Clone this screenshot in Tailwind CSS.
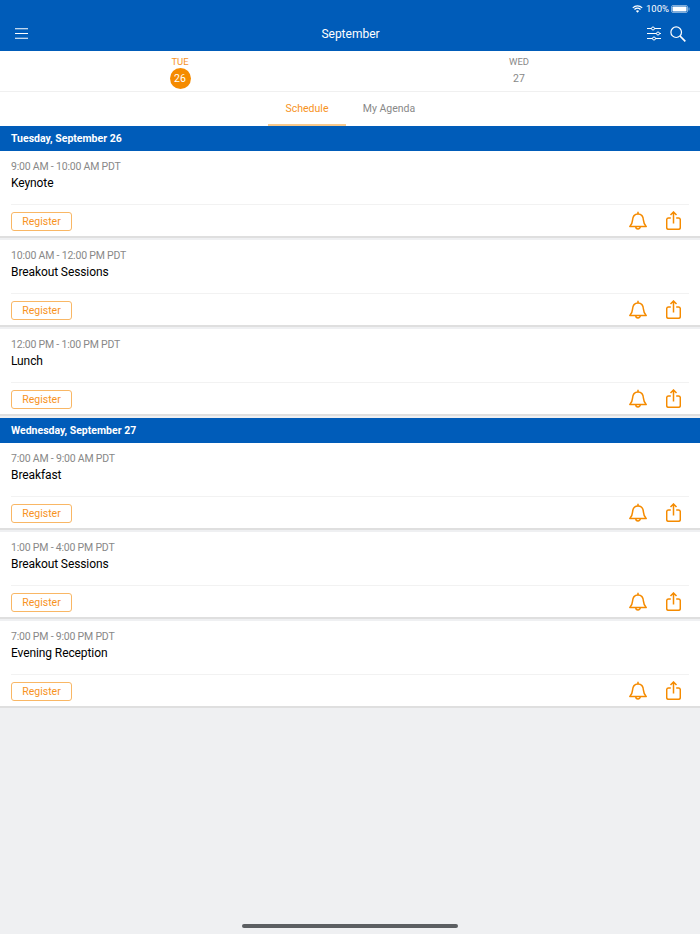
<!DOCTYPE html>
<html lang="en">
<head>
    <meta charset="UTF-8">
    <meta name="viewport" content="width=device-width, initial-scale=1.0">
    <title>Schedule</title>
    <script src="https://cdn.jsdelivr.net/npm/@tailwindcss/browser@4"></script>
</head>
<body class="bg-[#eff0f2] font-['Roboto',sans-serif]">
    <div class="relative h-[934px] w-[700px] overflow-hidden">
        <!-- header -->
        <header class="h-[51px] bg-[#005cb9] text-white">
            <div class="flex h-[16px] items-center justify-end gap-[2px] pr-[10px] pt-[1px]">
                <svg class="mr-[1px] w-[11px] h-[8px]" viewBox="0 0 12 9" fill="none" stroke="white"><path d="M.7 3.200a7.600 7.600 0 0 1 10.600 0" stroke-width="1.400"/><path d="M2.600 5a4.900 4.900 0 0 1 6.800 0" stroke-width="1.400"/><path d="M6 8.800 4.200 6.800a2.600 2.600 0 0 1 3.600 0z" fill="white" stroke="none"/></svg>
                <span class="text-[9.500px] leading-none">100%</span>
                <svg class="w-[19px] h-[8px]" viewBox="0 0 19 8"><rect x=".5" y=".5" width="16" height="7" rx="1.500" fill="none" stroke="white" stroke-opacity=".5"/><rect x="1.500" y="1.500" width="14" height="5" rx=".8" fill="white"/><rect x="17.500" y="2.500" width="1" height="3" fill="white" fill-opacity=".5"/></svg>
            </div>
            <div class="grid h-[35px] grid-cols-[1fr_auto_1fr] items-center pl-[15px] pr-[14px]">
                <svg class="w-[13px] h-[11px]" viewBox="0 0 13 11" stroke="white" stroke-width="1.100"><path d="M0 .8h13M0 5.500h13M0 10.200h13"/></svg>
                <span class="pt-[1px] text-[12px]">September</span>
                <div class="flex items-center justify-end gap-[9px]">
                    <svg class="w-[14px] h-[15px]" viewBox="0 0 14 15" fill="none" stroke="white" stroke-width="1"><path d="M0 2.500h4.500M7.500 2.500H14M0 7.500h9.500M12.500 7.500H14M0 12.500h5.500M8.500 12.500H14"/><circle cx="6" cy="2.500" r="1.500"/><circle cx="11" cy="7.500" r="1.500"/><circle cx="7" cy="12.500" r="1.500"/></svg>
                    <svg class="w-[16px] h-[16px]" viewBox="0 0 16 16" fill="none" stroke="white"><circle cx="6.200" cy="6.200" r="5.300" stroke-width="1.200"/><path d="m10 10 5.300 5.300" stroke-width="1.700"/></svg>
                </div>
            </div>
        </header>

        <!-- date strip -->
        <div class="grid h-[41px] grid-cols-[360px_318px] border-b border-[#f0f0f0] bg-white text-center">
            <div class="flex flex-col items-center pt-[5px]">
                <span class="text-[9.500px] leading-[11px] text-[#f7931e]">TUE</span>
                <span class="mt-[1px] flex h-[21px] w-[21px] items-center justify-center rounded-full bg-[#f58b00] text-[10.500px] text-white">26</span>
            </div>
            <div class="flex flex-col items-center pt-[5px]">
                <span class="text-[9.500px] leading-[11px] text-[#888888]">WED</span>
                <span class="mt-[1px] flex h-[21px] w-[21px] items-center justify-center text-[10.500px] text-[#888888]">27</span>
            </div>
        </div>

        <!-- tabs -->
        <div class="flex h-[34px] bg-white pl-[268px] text-[10.500px]">
            <div class="flex h-[34px] w-[78px] items-center justify-center border-b-2 border-[#f9c98b] pt-[1px] text-[#f7931e]">Schedule</div>
            <div class="flex h-[34px] w-[86px] items-center justify-center pb-[1px] text-[#888888]">My Agenda</div>
        </div>

        <!-- Tuesday -->
        <h2 class="flex h-[25px] items-center bg-[#005cb9] pl-[11px] pt-[1px] text-[10.500px] font-bold text-white">Tuesday, September 26</h2>
        <div class="flex flex-col gap-[2px]">
            <article class="h-[87px] border-b-2 border-[#dfdfdf] bg-white px-[11px]">
                <div class="h-[54px] border-b border-[#f2f2f2] pt-[8px]">
                    <p class="text-[10.500px] leading-[16px] tracking-[-0.2px] text-[#888888]">9:00 AM - 10:00 AM PDT</p>
                    <p class="text-[12px] leading-[17px] tracking-[-0.1px] text-black">Keynote</p>
                </div>
                <div class="flex items-start justify-between pt-[6px]">
                    <button class="mt-[1px] flex h-[19px] w-[61px] items-center justify-center rounded-[3px] border border-[#f9b765] text-[10.500px] text-[#f7931e]">Register</button>
                    <div class="flex gap-[19px] pr-[8px]">
                        <svg class="w-[18px] h-[19px]" viewBox="0 0 18 19" fill="none" stroke="#f58b00" stroke-width="1.500" stroke-linejoin="round"><path d="M.8 15.500c1.700-1.500 2.500-3.200 2.700-6.100C3.700 5.700 5.800 3 9 3s5.300 2.700 5.500 6.400c.2 2.900 1 4.600 2.700 6.100z"/><path d="M9 3V.8M6.800 15.700a2.200 2.200 0 0 0 4.400 0"/></svg>
                        <svg class="w-[15px] h-[19px]" viewBox="0 0 15 19" fill="none" stroke="#f58b00" stroke-width="1.500" stroke-linejoin="round"><path d="M4.800 7H2.500A1.800 1.800 0 0 0 .7 8.800v7.700a1.800 1.800 0 0 0 1.800 1.800h10a1.800 1.800 0 0 0 1.800-1.800V8.800A1.800 1.800 0 0 0 12.500 7h-2.300"/><path d="M7.500 12.500V1M4.500 4l3-3.100 3 3.100"/></svg>
                    </div>
                </div>
            </article>
            <article class="h-[87px] border-b-2 border-[#dfdfdf] bg-white px-[11px]">
                <div class="h-[54px] border-b border-[#f2f2f2] pt-[8px]">
                    <p class="text-[10.500px] leading-[16px] tracking-[-0.2px] text-[#888888]">10:00 AM - 12:00 PM PDT</p>
                    <p class="text-[12px] leading-[17px] tracking-[-0.1px] text-black">Breakout Sessions</p>
                </div>
                <div class="flex items-start justify-between pt-[6px]">
                    <button class="mt-[1px] flex h-[19px] w-[61px] items-center justify-center rounded-[3px] border border-[#f9b765] text-[10.500px] text-[#f7931e]">Register</button>
                    <div class="flex gap-[19px] pr-[8px]">
                        <svg class="w-[18px] h-[19px]" viewBox="0 0 18 19" fill="none" stroke="#f58b00" stroke-width="1.500" stroke-linejoin="round"><path d="M.8 15.500c1.700-1.500 2.500-3.200 2.700-6.100C3.700 5.700 5.800 3 9 3s5.300 2.700 5.500 6.400c.2 2.900 1 4.600 2.700 6.100z"/><path d="M9 3V.8M6.800 15.700a2.200 2.200 0 0 0 4.400 0"/></svg>
                        <svg class="w-[15px] h-[19px]" viewBox="0 0 15 19" fill="none" stroke="#f58b00" stroke-width="1.500" stroke-linejoin="round"><path d="M4.800 7H2.500A1.800 1.800 0 0 0 .7 8.800v7.700a1.800 1.800 0 0 0 1.800 1.800h10a1.800 1.800 0 0 0 1.800-1.800V8.800A1.800 1.800 0 0 0 12.500 7h-2.300"/><path d="M7.500 12.500V1M4.500 4l3-3.100 3 3.100"/></svg>
                    </div>
                </div>
            </article>
            <article class="h-[87px] border-b-2 border-[#dfdfdf] bg-white px-[11px]">
                <div class="h-[54px] border-b border-[#f2f2f2] pt-[8px]">
                    <p class="text-[10.500px] leading-[16px] tracking-[-0.2px] text-[#888888]">12:00 PM - 1:00 PM PDT</p>
                    <p class="text-[12px] leading-[17px] tracking-[-0.1px] text-black">Lunch</p>
                </div>
                <div class="flex items-start justify-between pt-[6px]">
                    <button class="mt-[1px] flex h-[19px] w-[61px] items-center justify-center rounded-[3px] border border-[#f9b765] text-[10.500px] text-[#f7931e]">Register</button>
                    <div class="flex gap-[19px] pr-[8px]">
                        <svg class="w-[18px] h-[19px]" viewBox="0 0 18 19" fill="none" stroke="#f58b00" stroke-width="1.500" stroke-linejoin="round"><path d="M.8 15.500c1.700-1.500 2.500-3.200 2.700-6.100C3.700 5.700 5.800 3 9 3s5.300 2.700 5.500 6.400c.2 2.900 1 4.600 2.700 6.100z"/><path d="M9 3V.8M6.800 15.700a2.200 2.200 0 0 0 4.400 0"/></svg>
                        <svg class="w-[15px] h-[19px]" viewBox="0 0 15 19" fill="none" stroke="#f58b00" stroke-width="1.500" stroke-linejoin="round"><path d="M4.800 7H2.500A1.800 1.800 0 0 0 .7 8.800v7.700a1.800 1.800 0 0 0 1.800 1.800h10a1.800 1.800 0 0 0 1.800-1.800V8.800A1.800 1.800 0 0 0 12.500 7h-2.300"/><path d="M7.500 12.500V1M4.500 4l3-3.100 3 3.100"/></svg>
                    </div>
                </div>
            </article>
        </div>

        <!-- Wednesday -->
        <h2 class="mt-[2px] flex h-[25px] items-center bg-[#005cb9] pl-[11px] pt-[1px] text-[10.500px] font-bold text-white">Wednesday, September 27</h2>
        <div class="flex flex-col gap-[2px]">
            <article class="h-[87px] border-b-2 border-[#dfdfdf] bg-white px-[11px]">
                <div class="h-[54px] border-b border-[#f2f2f2] pt-[8px]">
                    <p class="text-[10.500px] leading-[16px] tracking-[-0.2px] text-[#888888]">7:00 AM - 9:00 AM PDT</p>
                    <p class="text-[12px] leading-[17px] tracking-[-0.1px] text-black">Breakfast</p>
                </div>
                <div class="flex items-start justify-between pt-[6px]">
                    <button class="mt-[1px] flex h-[19px] w-[61px] items-center justify-center rounded-[3px] border border-[#f9b765] text-[10.500px] text-[#f7931e]">Register</button>
                    <div class="flex gap-[19px] pr-[8px]">
                        <svg class="w-[18px] h-[19px]" viewBox="0 0 18 19" fill="none" stroke="#f58b00" stroke-width="1.500" stroke-linejoin="round"><path d="M.8 15.500c1.700-1.500 2.500-3.200 2.700-6.100C3.700 5.700 5.800 3 9 3s5.300 2.700 5.500 6.400c.2 2.900 1 4.600 2.700 6.100z"/><path d="M9 3V.8M6.800 15.700a2.200 2.200 0 0 0 4.400 0"/></svg>
                        <svg class="w-[15px] h-[19px]" viewBox="0 0 15 19" fill="none" stroke="#f58b00" stroke-width="1.500" stroke-linejoin="round"><path d="M4.800 7H2.500A1.800 1.800 0 0 0 .7 8.800v7.700a1.800 1.800 0 0 0 1.800 1.800h10a1.800 1.800 0 0 0 1.800-1.800V8.800A1.800 1.800 0 0 0 12.500 7h-2.300"/><path d="M7.500 12.500V1M4.500 4l3-3.100 3 3.100"/></svg>
                    </div>
                </div>
            </article>
            <article class="h-[87px] border-b-2 border-[#dfdfdf] bg-white px-[11px]">
                <div class="h-[54px] border-b border-[#f2f2f2] pt-[8px]">
                    <p class="text-[10.500px] leading-[16px] tracking-[-0.2px] text-[#888888]">1:00 PM - 4:00 PM PDT</p>
                    <p class="text-[12px] leading-[17px] tracking-[-0.1px] text-black">Breakout Sessions</p>
                </div>
                <div class="flex items-start justify-between pt-[6px]">
                    <button class="mt-[1px] flex h-[19px] w-[61px] items-center justify-center rounded-[3px] border border-[#f9b765] text-[10.500px] text-[#f7931e]">Register</button>
                    <div class="flex gap-[19px] pr-[8px]">
                        <svg class="w-[18px] h-[19px]" viewBox="0 0 18 19" fill="none" stroke="#f58b00" stroke-width="1.500" stroke-linejoin="round"><path d="M.8 15.500c1.700-1.500 2.500-3.200 2.700-6.100C3.700 5.700 5.800 3 9 3s5.300 2.700 5.500 6.400c.2 2.900 1 4.600 2.700 6.100z"/><path d="M9 3V.8M6.800 15.700a2.200 2.200 0 0 0 4.400 0"/></svg>
                        <svg class="w-[15px] h-[19px]" viewBox="0 0 15 19" fill="none" stroke="#f58b00" stroke-width="1.500" stroke-linejoin="round"><path d="M4.800 7H2.500A1.800 1.800 0 0 0 .7 8.800v7.700a1.800 1.800 0 0 0 1.800 1.800h10a1.800 1.800 0 0 0 1.800-1.800V8.800A1.800 1.800 0 0 0 12.500 7h-2.300"/><path d="M7.500 12.500V1M4.500 4l3-3.100 3 3.100"/></svg>
                    </div>
                </div>
            </article>
            <article class="h-[87px] border-b-2 border-[#dfdfdf] bg-white px-[11px]">
                <div class="h-[54px] border-b border-[#f2f2f2] pt-[8px]">
                    <p class="text-[10.500px] leading-[16px] tracking-[-0.2px] text-[#888888]">7:00 PM - 9:00 PM PDT</p>
                    <p class="text-[12px] leading-[17px] tracking-[-0.1px] text-black">Evening Reception</p>
                </div>
                <div class="flex items-start justify-between pt-[6px]">
                    <button class="mt-[1px] flex h-[19px] w-[61px] items-center justify-center rounded-[3px] border border-[#f9b765] text-[10.500px] text-[#f7931e]">Register</button>
                    <div class="flex gap-[19px] pr-[8px]">
                        <svg class="w-[18px] h-[19px]" viewBox="0 0 18 19" fill="none" stroke="#f58b00" stroke-width="1.500" stroke-linejoin="round"><path d="M.8 15.500c1.700-1.500 2.500-3.200 2.700-6.100C3.700 5.700 5.800 3 9 3s5.300 2.700 5.500 6.400c.2 2.900 1 4.600 2.700 6.100z"/><path d="M9 3V.8M6.800 15.700a2.200 2.200 0 0 0 4.400 0"/></svg>
                        <svg class="w-[15px] h-[19px]" viewBox="0 0 15 19" fill="none" stroke="#f58b00" stroke-width="1.500" stroke-linejoin="round"><path d="M4.800 7H2.500A1.800 1.800 0 0 0 .7 8.800v7.700a1.800 1.800 0 0 0 1.800 1.800h10a1.800 1.800 0 0 0 1.800-1.800V8.800A1.800 1.800 0 0 0 12.500 7h-2.300"/><path d="M7.500 12.500V1M4.500 4l3-3.100 3 3.100"/></svg>
                    </div>
                </div>
            </article>
        </div>

        <!-- home indicator -->
        <div class="absolute bottom-[6px] left-[242px] h-[4px] w-[216px] rounded-full bg-[#5c5f62]"></div>
    </div>
</body>
</html>
